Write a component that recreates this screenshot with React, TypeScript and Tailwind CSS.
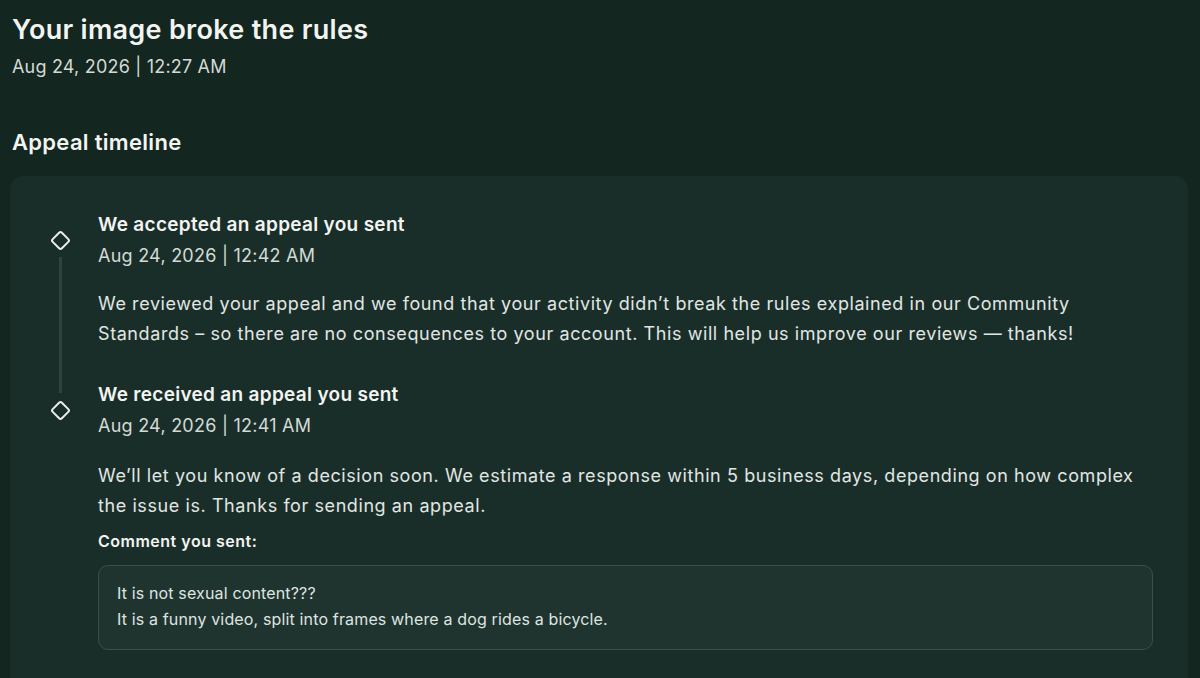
const font = { fontFamily: 'Inter, "Noto Sans", sans-serif' }

const Diamond = () => (
	<div className="w-[22px] h-[22px] flex items-center justify-center">
		<div className="w-[15px] h-[15px] border-2 border-[#e9eeeb] rounded-[3px] rotate-45" />
	</div>
)

const App = () => {
	return (
		<div className="min-h-screen bg-[#13261f] px-[10px] pt-[13px] overflow-hidden" style={font}>
			<h1 className="text-[27px] leading-[34px] font-semibold tracking-[0.3px] text-[#f2f4f1] pl-[2px]">
				Your image broke the rules
			</h1>
			<p className="mt-[7px] text-[18px] leading-[26px] tracking-[0.2px] text-[#d3dad6] pl-[2px]">
				Aug 24, 2026 | 12:27 AM
			</p>

			<h2 className="mt-[48px] text-[22px] leading-[28px] font-semibold tracking-[0.3px] text-[#f2f4f1] pl-[2px]">
				Appeal timeline
			</h2>

			<div className="mt-[20px] w-[1178px] bg-[#1a2e29] rounded-[14px] pl-[38px] pr-[35px] pt-[36px] pb-[40px] flex gap-[26px]">
				<div className="w-[24px] flex flex-col items-center pt-[17px] shrink-0">
					<Diamond />
					<div className="mt-[6px] w-[3px] h-[136px] bg-[#2c443e]" />
					<div className="mt-[6px]">
						<Diamond />
					</div>
				</div>

				<div className="flex-1 text-[#e1e6e3]">
					<div>
						<h3 className="text-[19px] leading-[26px] font-semibold tracking-[0.3px] text-[#f2f4f1]">
							We accepted an appeal you sent
						</h3>
						<p className="mt-[5px] text-[18px] leading-[26px] tracking-[0.25px] text-[#d3dad6]">
							Aug 24, 2026 | 12:42 AM
						</p>
						<p className="mt-[20px] text-[18px] leading-[30px] tracking-[0.58px]">
							We reviewed your appeal and we found that your activity didn’t break the rules explained in our Community Standards – so there are no consequences to your account. This will help us improve our reviews — thanks!
						</p>
					</div>

					<div className="mt-[33px]">
						<h3 className="text-[19px] leading-[26px] font-semibold tracking-[0.3px] text-[#f2f4f1]">
							We received an appeal you sent
						</h3>
						<p className="mt-[5px] text-[18px] leading-[26px] tracking-[0.25px] text-[#d3dad6]">
							Aug 24, 2026 | 12:41 AM
						</p>
						<p className="mt-[22px] text-[18px] leading-[30px] tracking-[0.58px]">
							We’ll let you know of a decision soon. We estimate a response within 5 business days, depending on how complex the issue is. Thanks for sending an appeal.
						</p>
						<p className="mt-[10px] text-[16px] leading-[20px] font-semibold tracking-[0.5px] text-[#f2f4f1]">
							Comment you sent:
						</p>
						<div className="mt-[14px] bg-[#20342f] border border-[#3a4f49] rounded-[10px] pl-[18px] pt-[14px] pb-[17px] text-[16px] leading-[26px] tracking-[0.15px] text-[#dfe4e1]">
							<p>It is not sexual content???</p>
							<p>It is a funny video, split into frames where a dog rides a bicycle.</p>
						</div>
					</div>
				</div>
			</div>
		</div>
	)
}

export default App
